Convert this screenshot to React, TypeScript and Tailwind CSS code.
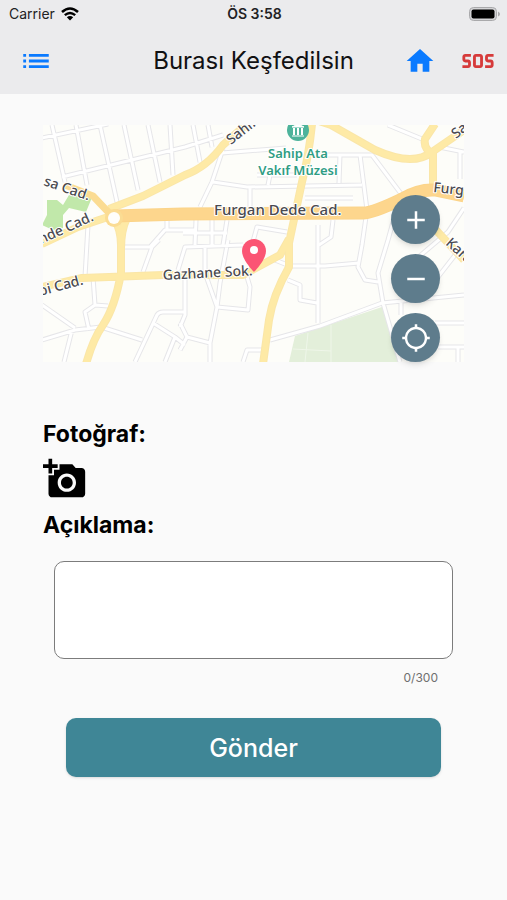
import { useState } from "react";
import {
  MdAdd,
  MdAddAPhoto,
  MdHome,
  MdList,
  MdLocationSearching,
  MdRemove,
  MdSos,
} from "react-icons/md";

const MAX_LENGTH = 300;

const STREETS = [
  "M-1 13L65 -1",
  "M9 0L22 57",
  "M33 0L44 60",
  "M57 0L74 77",
  "M81 0L95 65",
  "M105 0L117 57",
  "M127 0L130 50",
  "M19 52L142 22L180 10",
  "M150 0L157 37",
  "M165 0L169 22",
  "M45 100L42 152",
  "M50 152L52 180L65 181",
  "M52 180L42 187L46 205",
  "M-1 180L32 203",
  "M-1 215L32 205L58 202L99 215",
  "M29 205L21 237",
  "M92 237L114 190Q116 187 120 187L142 187",
  "M110 198L132 212L142 220",
  "M132 212L122 237",
  "M80 122L109 122L116 115",
  "M109 122L100 147",
  "M152 105L122 105L107 122",
  "M124 95V105",
  "M135 145L142 122L200 120",
  "M162 122V148L174 182L167 218L144 212L137 198",
  "M185 115L177 158L174 182L205 185L207 162L202 145",
  "M142 150V190L137 202",
  "M167 218V237",
  "M137 225L144 212",
  "M200 237L204 225H219",
  "M227 133L247 141L282 141L316 138",
  "M245 155L257 160V175L274 178",
  "M275 100V198",
  "M227 215L277 201L339 178L421 170",
  "M179 28L243 23",
  "M180 24L169 57L157 82",
  "M170 57L204 62L319 60",
  "M207 62V82",
  "M214 50H254",
  "M227 50L225 60",
  "M262 73H310",
  "M184 95L180 120",
  "M153 95L152 120",
  "M169 95V120",
  "M140 108H184",
  "M209 120L214 102L244 107",
  "M345 0L379 14",
  "M297 30L296 58",
  "M276 30H329L359 70",
  "M317 30L324 85L319 120L315 142L322 155L335 157",
  "M290 95L288 112L276 120",
  "M396 22L421 27",
  "M417 27V54",
  "M350 97L345 115L335 148L340 178L357 237",
  "M421 83L405 107L372 135",
  "M416 125L395 152",
  "M392 198H421",
  "M395 222H421",
  "M415 222V237",
  "M358 177V190",
];

const AVENUES = [
  "M-1 119L35 102L71 90",
  "M66 84L100 71L142 50Q164 42 180 20L205 -2",
  "M71 93Q78 105 78 120V148Q72 182 60 200Q50 214 43 239",
  "M84 93Q78 105 78 124",
  "M-1 162L39 153L120 150H200L237 130L246 114",
  "M269 -1Q266 30 259 57L246 118V142Q230 170 226 195L220 239",
  "M270 -6L288 0L332 25Q370 42 389 27L421 5",
  "M392 -1L382 14Q380 24 391 30",
  "M390 28V62",
  "M392 104L421 135",
];

const BOULEVARDS = [
  "M22 60L50 71L68 90",
  "M71 91L140 89L320 88Q330 88 359 74Q376 64 392 65L421 71",
];

const STREET_LABELS = [
  { text: "sa Cad.", x: 0, y: 60, angle: 19, size: 14 },
  { text: "nde Cad.", x: -2, y: 119, angle: -24, size: 14 },
  { text: "bi Cad.", x: -3, y: 171, angle: -15, size: 14 },
  { text: "Furgan Dede Cad.", x: 171, y: 90, angle: 0, size: 15 },
  { text: "Gazhane Sok.", x: 120, y: 155, angle: -3, size: 14 },
  { text: "Sahi.", x: 188, y: 20, angle: -38, size: 14 },
  { text: "Sa", x: 413, y: 14, angle: -38, size: 14 },
  { text: "Furg", x: 390, y: 67, angle: 6, size: 14 },
  { text: "Kara", x: 402, y: 119, angle: 42, size: 14 },
];

const StatusBar = () => (
  <div className="grid grid-cols-3 items-center h-7 pl-[9px] pr-[7px] text-sm text-[#222224]">
    <div className="flex items-center gap-[6px]">
      <span>Carrier</span>
      <svg viewBox="0 0 18 14" className="w-[18px] h-[14px]" fill="none">
        <path d="M1 5Q9 -2 17 5" stroke="#000" strokeWidth="2.6" />
        <path d="M3.8 8.2Q9 3.6 14.2 8.2" stroke="#000" strokeWidth="2.4" />
        <path d="M9 13.5L5.8 10.2Q9 7.6 12.2 10.2Z" fill="#000" />
      </svg>
    </div>
    <span className="text-center font-semibold">ÖS 3:58</span>
    <svg viewBox="0 0 31 14" className="w-[31px] h-[14px] justify-self-end">
      <rect x="0.5" y="0.5" width="27" height="13" rx="4" fill="#d4d4d6" stroke="#a9a9ab" />
      <rect x="2.5" y="2.5" width="23" height="9" rx="2" fill="#000" />
      <path d="M29 4.5Q31 5.5 31 7T29 9.5Z" fill="#a9a9ab" />
    </svg>
  </div>
);

const NavBar = () => (
  <nav className="grid grid-cols-[auto_1fr_auto] items-center h-[66px] pl-[19px] pr-3">
    <button type="button" aria-label="Menü" className="text-[#0a7aff]">
      <MdList size={34} />
    </button>
    <h1 className="pl-[50px] text-center text-2xl text-[#111113]">
      Burası Keşfedilsin
    </h1>
    <div className="flex items-center gap-[25px]">
      <button type="button" aria-label="Ana sayfa" className="text-[#0a7aff]">
        <MdHome size={32} />
      </button>
      <button type="button" aria-label="SOS" className="text-[#d63a3a]">
        <MdSos size={34} />
      </button>
    </div>
  </nav>
);

const MapDrawing = () => (
  <svg
    viewBox="0 0 421 237"
    preserveAspectRatio="xMidYMid slice"
    className="block w-full h-[237px] bg-[#fdfdf9]"
    fill="none"
    strokeLinejoin="round"
  >
    <path d="M252 211L342 181L357 237H246Z" fill="#e3efda" />
    <path d="M265 208L262 237M288 200V237M250 224L288 226" stroke="#eff6e9" strokeWidth="1" />
    <path
      d="M4 75L14 75L20 80L26 70L50 70L43 87L26 83L20 90V103L10 105L-1 100L4 90Z"
      fill="#c1e8aa"
    />
    <path d={STREETS.join("")} stroke="#e6e6e9" strokeWidth="5" />
    <path d={STREETS.join("")} stroke="#fff" strokeWidth="3" />
    <path d={AVENUES.join("")} stroke="#fae6a8" strokeWidth="8" />
    <path d={AVENUES.join("")} stroke="#feeaa6" strokeWidth="6" />
    <path d={BOULEVARDS[0]} stroke="#fbdc93" strokeWidth="7" />
    <path d={BOULEVARDS[1]} stroke="#fbd48a" strokeWidth="13" />
    <path d={BOULEVARDS[1]} stroke="#fdd68d" strokeWidth="11" />
    <circle cx="71" cy="93" r="9" fill="#fbdc93" />
    <circle cx="71" cy="93" r="6" fill="#fffefa" />

    <g
      fontFamily="'Noto Sans', sans-serif"
      stroke="#fff"
      strokeWidth="2"
      paintOrder="stroke"
    >
      <g fontWeight="500" fill="#4a4a50">
        {STREET_LABELS.map(({ text, x, y, angle, size }) => (
          <text
            key={text}
            fontSize={size}
            transform={`translate(${x} ${y}) rotate(${angle})`}
          >
            {text}
          </text>
        ))}
      </g>
      <g fontSize="13" fontWeight="600" fill="#2f9d83" textAnchor="middle">
        <text x="255" y="33">Sahip Ata</text>
        <text x="255" y="50">Vakıf Müzesi</text>
      </g>
    </g>

    <circle cx="255" cy="5" r="11" fill="#4db39b" />
    <path d="M249 2L255 -1L261 2ZM249 11H261" stroke="#fff" strokeWidth="1" fill="#fff" />
    <path d="M251 3V10M255 3V10M259 3V10" stroke="#fff" strokeWidth="2" />
    <path
      d="M211 114C204.500 114 199 119.300 199 126C199 135 211 147 211 147S223 135 223 126C223 119.300 217.500 114 211 114Z"
      fill="#fb5574"
    />
    <circle cx="211" cy="125" r="4" fill="#fff" />
  </svg>
);

const MAP_BUTTONS = [
  { label: "Yakınlaştır", Icon: MdAdd },
  { label: "Uzaklaştır", Icon: MdRemove },
  { label: "Konumum", Icon: MdLocationSearching },
];

const MapPanel = () => (
  <section className="relative">
    <MapDrawing />
    <div className="absolute right-6 bottom-0 flex flex-col gap-[10px]">
      {MAP_BUTTONS.map(({ label, Icon }) => (
        <button
          key={label}
          type="button"
          aria-label={label}
          className="flex items-center justify-center size-[49px] rounded-full bg-[#5e7c8c] text-white shadow-md"
        >
          <Icon size={30} />
        </button>
      ))}
    </div>
  </section>
);

const App = () => {
  const [description, setDescription] = useState("");

  return (
    <div className="min-h-screen bg-[#fafafa] font-['Inter',sans-serif]">
      <header className="bg-[#ebebed]">
        <StatusBar />
        <NavBar />
      </header>
      <main className="px-[43px] pt-[31px]">
        <MapPanel />
        <form
          className="flex flex-col pt-14"
          onSubmit={(event) => event.preventDefault()}
        >
          <h2 className="text-[23px] leading-8 font-bold text-black">Fotoğraf:</h2>
          <button
            type="button"
            aria-label="Fotoğraf ekle"
            className="self-start mt-[7px] text-black"
          >
            <MdAddAPhoto size={44} />
          </button>
          <label
            htmlFor="description"
            className="mt-2 text-[23px] leading-8 font-bold text-black"
          >
            Açıklama:
          </label>
          <textarea
            id="description"
            maxLength={MAX_LENGTH}
            value={description}
            onChange={(event) => setDescription(event.target.value)}
            className="mt-5 mx-[11px] h-[98px] p-3 rounded-[10px] border border-[#7c7c7c] bg-white resize-none"
          />
          <span className="mt-[11px] mr-[26px] self-end text-xs text-[#6f6f6f]">
            {description.length}/{MAX_LENGTH}
          </span>
          <button
            type="submit"
            className="mt-8 mx-[23px] h-[59px] rounded-[10px] bg-[#3f8696] text-[25px] leading-8 font-medium text-white shadow-sm"
          >
            Gönder
          </button>
        </form>
      </main>
    </div>
  );
};

export default App;
